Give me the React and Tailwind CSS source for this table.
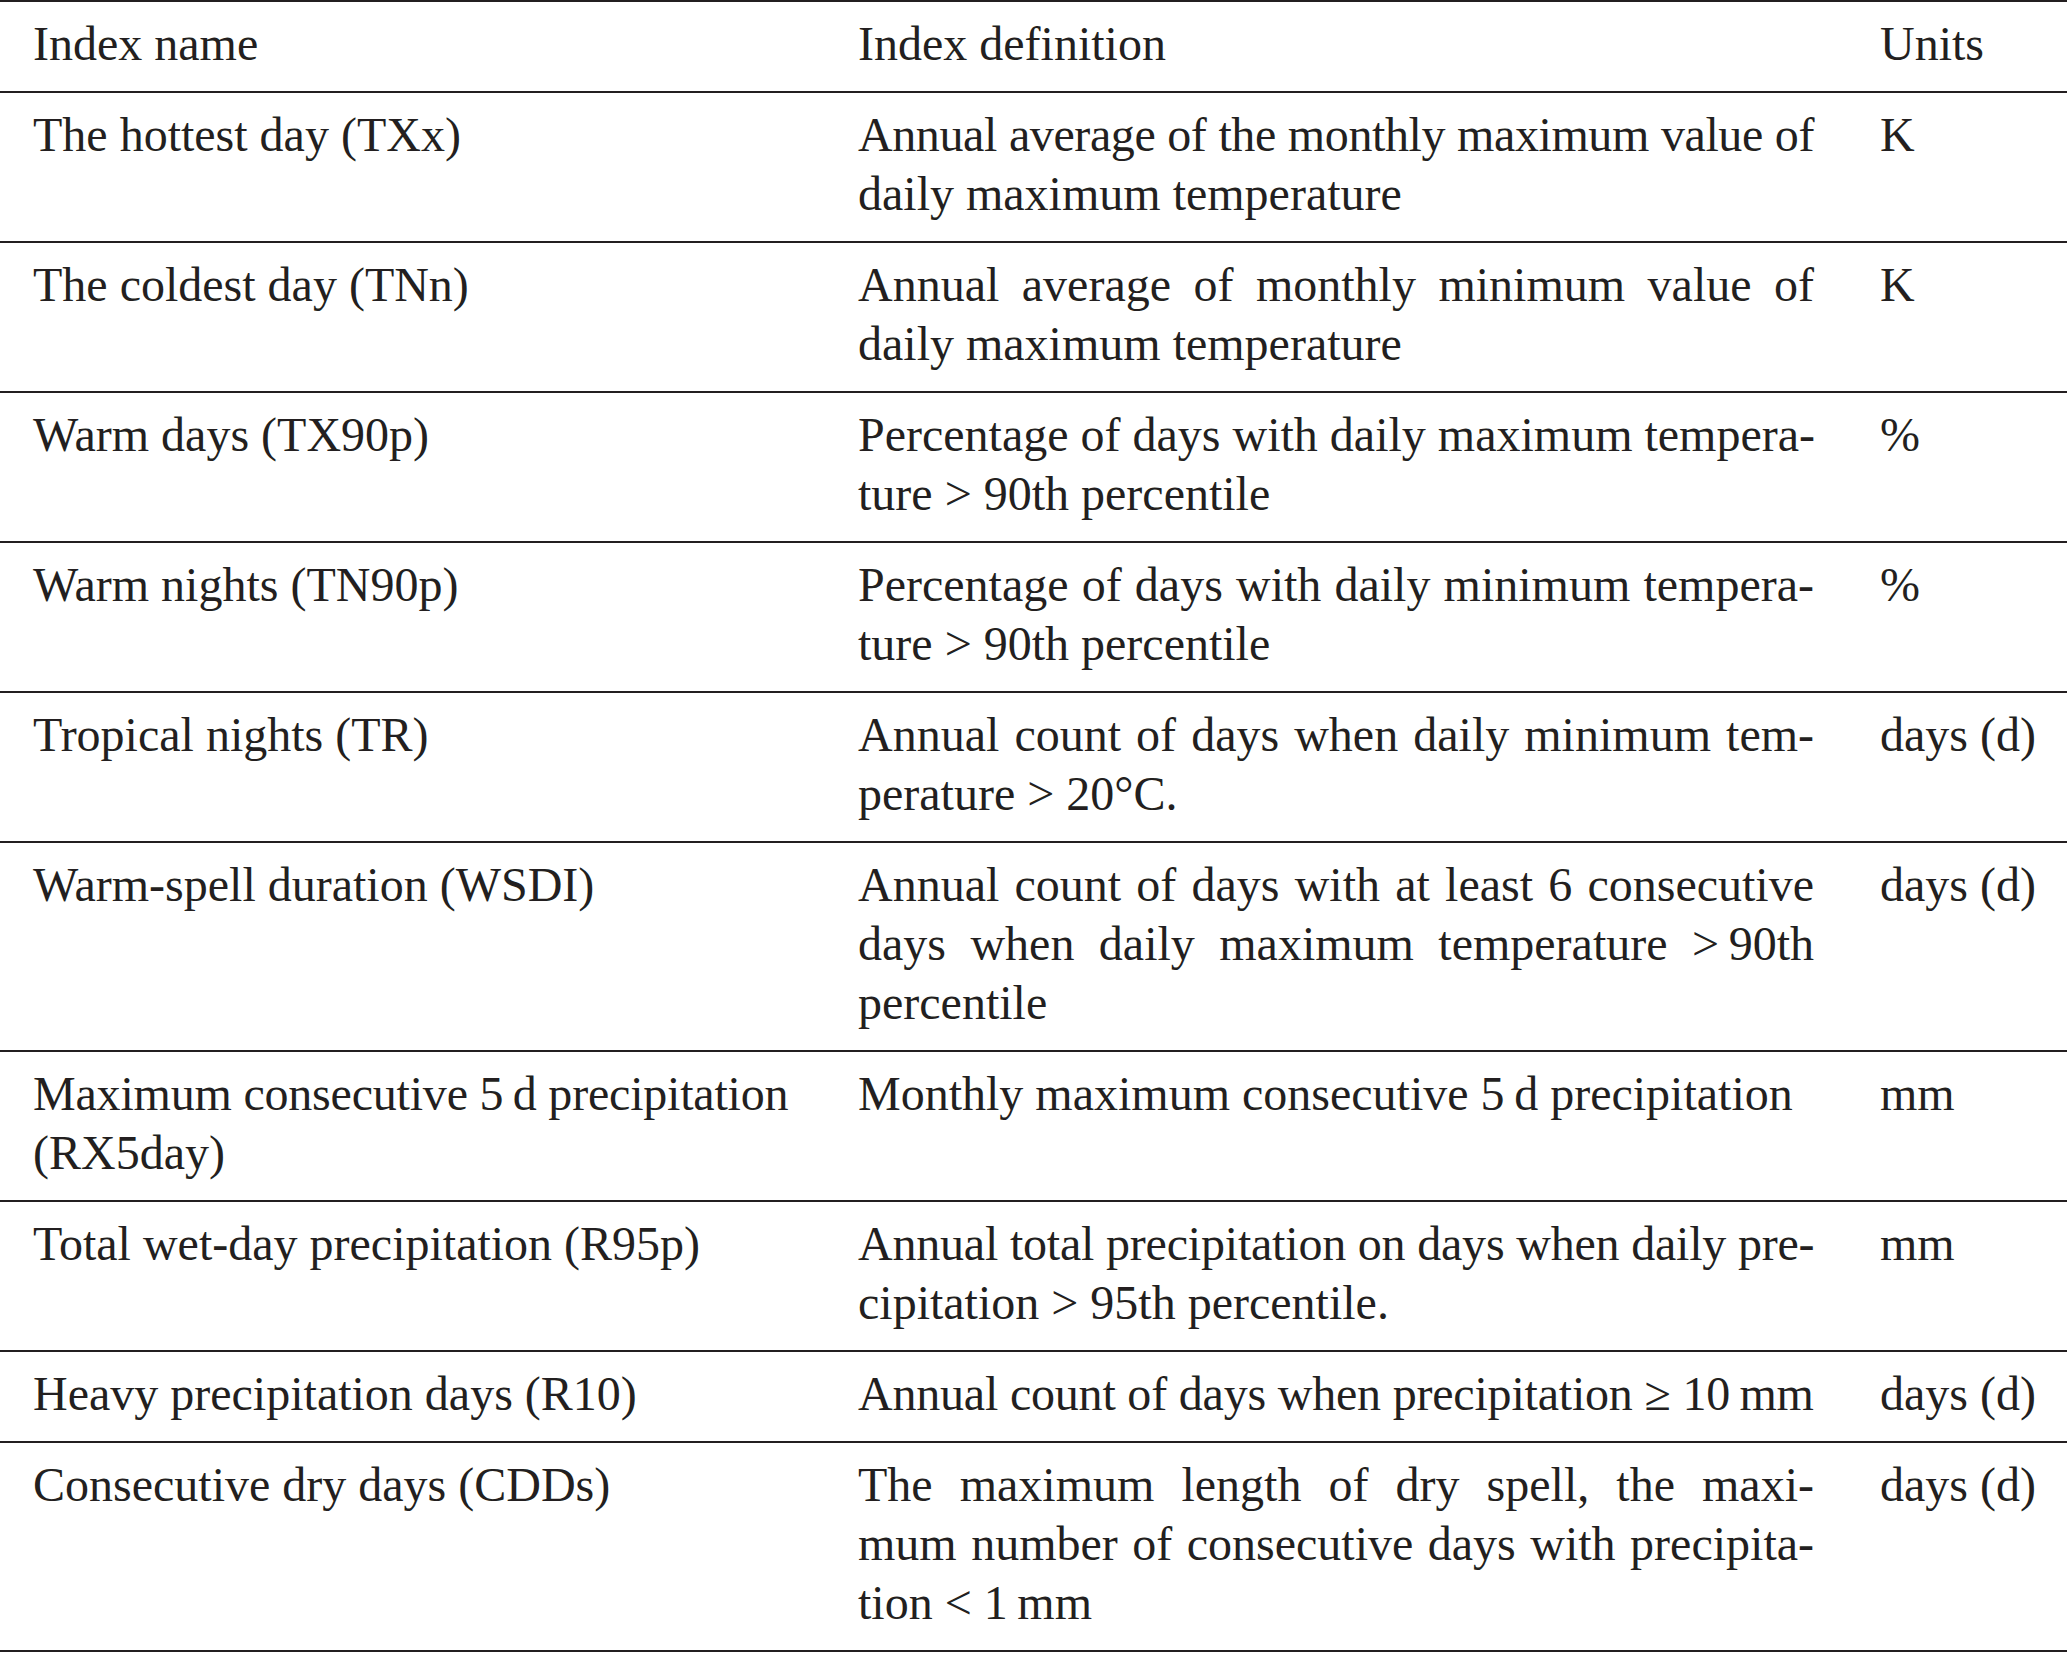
import React from 'react';

// a line starting with "~" is set a little tighter so it fits the column
const rows = [
  { name: ['The hottest day (TXx)'], def: ['~4Annual average of the monthly maximum value of', 'daily maximum temperature'], unit: 'K' },
  { name: ['The coldest day (TNn)'], def: ['Annual average of monthly minimum value of', 'daily maximum temperature'], unit: 'K' },
  { name: ['Warm days (TX90p)'], def: ['Percentage of days with daily maximum tempera-', 'ture > 90th percentile'], unit: '%' },
  { name: ['Warm nights (TN90p)'], def: ['Percentage of days with daily minimum tempera-', 'ture > 90th percentile'], unit: '%' },
  { name: ['Tropical nights (TR)'], def: ['Annual count of days when daily minimum tem-', 'perature > 20\u00b0C.'], unit: 'days (d)' },
  {
    name: ['Warm-spell duration (WSDI)'],
    def: ['Annual count of days with at least 6 consecutive', 'days when daily maximum temperature >\u200990th', 'percentile'],
    unit: 'days (d)',
  },
  { name: ['~2Maximum consecutive 5\u2009d precipitation', '(RX5day)'], def: ['Monthly maximum consecutive 5\u2009d precipitation'], unit: 'mm' },
  { name: ['Total wet-day precipitation (R95p)'], def: ['~2Annual total precipitation on days when daily pre-', 'cipitation > 95th percentile.'], unit: 'mm' },
  { name: ['Heavy precipitation days (R10)'], def: ['~2Annual count of days when precipitation \u2265 10\u2009mm'], unit: 'days (d)' },
  {
    name: ['Consecutive dry days (CDDs)'],
    def: ['The maximum length of dry spell, the maxi-', 'mum number of consecutive days with precipita-', 'tion < 1\u2009mm'],
    unit: 'days (d)',
  },
];

const tracking = {
  '2': 'tracking-[-0.2px]',
  '4': 'tracking-[-0.4px]',
};

// justified lines (definition column only), the last one of a paragraph stays ragged
const Lines = ({ lines, justified }) => (
  <>
    {lines.map((raw, i) => {
      const tight = raw.startsWith('~') ? tracking[raw[1]] : '';
      const line = raw.startsWith('~') ? raw.slice(2) : raw;
      const justify = justified && i < lines.length - 1 ? 'text-justify [text-align-last:justify]' : '';
      return (
        <div key={i} className={`whitespace-nowrap ${justify} ${tight}`}>
          {line}
        </div>
      );
    })}
  </>
);

const Row = ({ row }) => (
  <div className="grid grid-cols-[829px_1014px_1fr] pt-[12px] pb-[18px] border-b-2 border-[#231f20]">
    <div className="pl-[33px] pr-[29px]">
      <Lines lines={row.name} />
    </div>
    <div className="px-[29px]">
      <Lines lines={row.def} justified />
    </div>
    <div className="pl-[37px]">{row.unit}</div>
  </div>
);

export default function App() {
  return (
    <div
      className="w-[2067px] bg-white text-[#231f20] text-[48px] leading-[59px]"
      style={{ fontFamily: '"Liberation Serif", "Times New Roman", serif' }}
    >
      <div className="border-t-2 border-[#231f20]">
        <Row row={{ name: ['Index name'], def: ['Index definition'], unit: 'Units' }} />
        {rows.map((row, i) => (
          <Row key={i} row={row} />
        ))}
      </div>
    </div>
  );
}
